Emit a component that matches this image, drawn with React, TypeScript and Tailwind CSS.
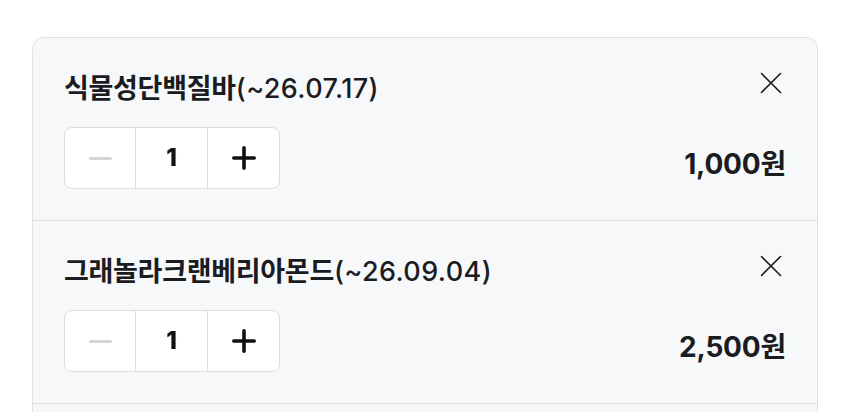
import React from "react"

type CartItem = {
  name: string
  expiry: string
  qty: number
  price: string
}

const items: CartItem[] = [
  { name: "식물성단백질바", expiry: "(~26.07.17)", qty: 1, price: "1,000원" },
  { name: "그래놀라크랜베리아몬드", expiry: "(~26.09.04)", qty: 1, price: "2,500원" }
]

const font = {
  fontFamily: 'Inter, "Noto Sans CJK KR", sans-serif'
}

const CloseIcon = () => (
  <svg width="22" height="22" viewBox="0 0 22 22" fill="none">
    <path
      d="M1.5 1.5 20.5 20.5M20.5 1.5 1.5 20.5"
      stroke="#1b1c1f"
      strokeWidth="1.6"
      strokeLinecap="round"
    />
  </svg>
)

const Stepper = ({ qty }: { qty: number }) => {
  return (
    <div className="flex h-[62px] bg-white border border-[#dcdde1] rounded-lg divide-x divide-[#dcdde1] overflow-hidden">
      <button className="w-[71px] flex items-center justify-center">
        <span className="block w-[23px] h-[3px] rounded-full bg-[#d5d6da]" />
      </button>
      <div className="w-[72px] flex items-center justify-center text-[24px] font-extrabold text-[#111]">
        {qty}
      </div>
      <button className="w-[71px] flex items-center justify-center">
        <svg width="24" height="24" viewBox="0 0 24 24" fill="none">
          <path
            d="M12 1.8v20.4M1.8 12h20.4"
            stroke="#111"
            strokeWidth="3.6"
            strokeLinecap="round"
          />
        </svg>
      </button>
    </div>
  )
}

const ItemRow = ({ item }: { item: CartItem }) => {
  return (
    <div className="h-[183px] px-[31px] pt-[35px] border-b border-[#e0e1e4]">
      <div className="flex items-start justify-between h-8">
        <h4 className="text-[27px] leading-8 font-semibold text-[#1b1c1f]">
          <span className="tracking-[-0.3px]">{item.name}</span>
          <span className="font-medium tracking-[0.4px]">{item.expiry}</span>
        </h4>
        <button className="-mt-[1px] mr-[4px]">
          <CloseIcon />
        </button>
      </div>

      <div className="mt-[22px] flex items-center justify-between">
        <Stepper qty={item.qty} />
        <span className="pt-[11px] text-[28px] leading-9 font-bold text-[#1b1c1f] tracking-[-0.2px]">
          {item.price}
        </span>
      </div>
    </div>
  )
}

export default function App() {
  return (
    <div className="h-[412px] bg-white pt-[37px] px-8 overflow-hidden" style={font}>
      <div className="w-[786px] pb-10 bg-[#f7f8fa] border border-[#e0e1e4] rounded-xl">
        {items.map((item) => (
          <ItemRow key={item.name} item={item} />
        ))}
      </div>
    </div>
  )
}
